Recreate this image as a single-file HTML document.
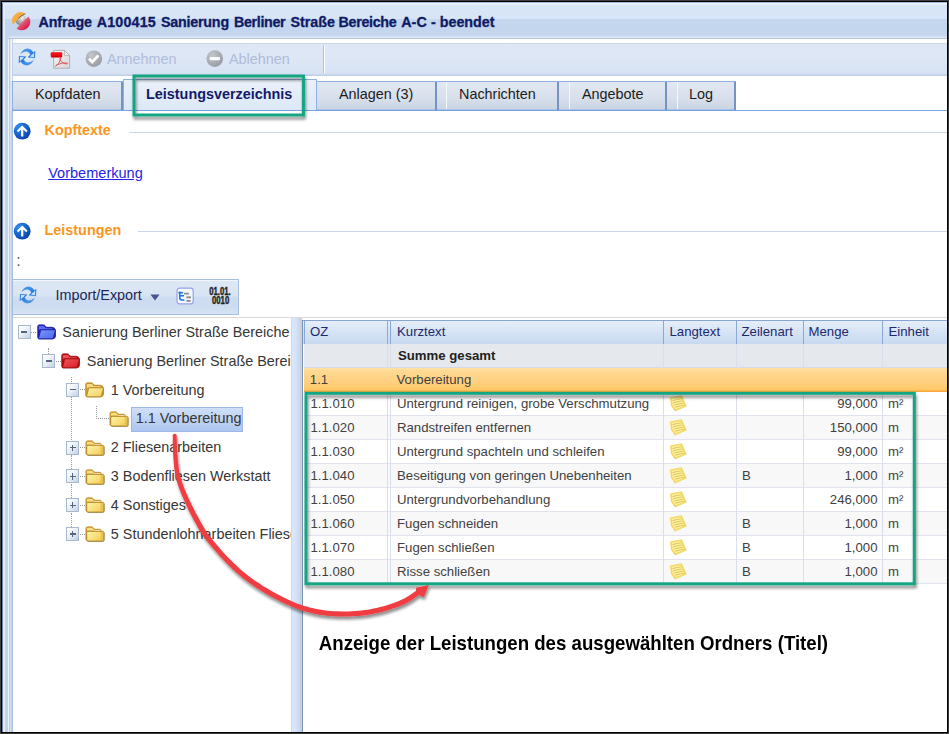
<!DOCTYPE html>
<html lang="de">
<head>
<meta charset="utf-8">
<title>Anfrage A100415 Sanierung Berliner Straße Bereiche A-C - beendet</title>
<style>
*{box-sizing:border-box;margin:0;padding:0}
html,body{width:949px;height:734px;overflow:hidden;background:#fff}
body{position:relative;font-family:"Liberation Sans",Arial,sans-serif;font-size:14.4px;color:#222}
.abs{position:absolute}
i{display:block;position:absolute}
.t{position:absolute;white-space:nowrap;line-height:1}
#frame{left:0;top:0;width:949px;height:734px;border:1px solid #3f3f3f}
#frame2{left:1px;top:1px;width:947px;height:732px;border:1px solid #000}
#hdr{left:2px;top:2px;width:945px;height:34px;background:linear-gradient(#a6bddd 0,#a6bddd 1px,#e9f0fa 1px,#e9f0fa 3.5px,#d9e6f7 3.5px,#d8e5f6 16.5px,#c5d7ef 17px,#c3d6ee 34px)}
#hdr2{left:8px;top:36px;width:939px;height:3px;border-top-left-radius:3px;background:linear-gradient(#d5e2f3 0,#d5e2f3 1px,#dfe8f4 1px,#dfe8f4 2px,#b4c5dc 2px,#b4c5dc 3px)}
#hdr3{left:2px;top:36px;width:14px;height:3px;background:#c3d6ee}
#title{left:38.5px;top:15px;font-weight:bold;font-size:14.3px;color:#0f1a66;-webkit-text-stroke:.3px #0f1a66}
#lstrip{left:5px;top:39px;width:8px;height:693px;background:linear-gradient(90deg,#c1d5ef 0,#c1d5ef 3px,#f0f4fa 3px,#f0f4fa 4px,#bfcbdf 4px,#bfcbdf 5px,#d8e0ec 5px,#d8e0ec 6px,#c0d1ea 6px,#c0d1ea 7px,#a6c0e6 7px,#a6c0e6 8px)}
#lstrip2{left:2px;top:3px;width:3px;height:729px;background:linear-gradient(90deg,#6f82a3 0,#6f82a3 1px,#e3ecf7 1px,#e3ecf7 3px)}
#body{left:13px;top:39px;width:934px;height:693px;background:#fff}
#tbar{left:12px;top:43px;width:935px;height:33px;border-left:1px solid #c1d0e6;background:linear-gradient(#c9d6ea 0,#c9d6ea 1px,#dfe8f6 1px,#dce6f5 18px,#d6e2f3 31px,#bfcfe6 32px,#bfcfe6 33px)}
.dis{color:#b0bcd9}
#tsep{left:323px;top:45px;width:2px;height:28px;background:linear-gradient(90deg,#a9c3e6 0,#a9c3e6 1px,#fff 1px)}
#tabs{left:12px;top:81px;width:724px;height:30px;background:linear-gradient(#8fb0e0 0,#8fb0e0 1px,#e1e8f1 1px,#d9e1ec 15px,#cbd6e3 28px,#a9c3ea 28px,#a9c3ea 29px,#6593d8 29px,#6593d8 30px)}
.tsd{position:absolute;top:82px;width:2px;height:28px;background:#7594c3}
.tsw{position:absolute;top:82px;width:1px;height:27px;background:#f4f7fb}
.tabt{position:absolute;top:87px;white-space:nowrap;line-height:1;color:#1c1c1c;font-size:14.4px}
#atab{left:123px;top:79px;width:193.5px;height:31px;background:linear-gradient(#eaf1fb,#dde8f7);border:1px solid #8fb0e0;border-bottom:0}
#tabline{left:12px;top:110px;width:935px;height:1px;background:#7aa2de}
.sec{font-weight:bold;color:#fa961e;font-size:14.4px}
.sline{position:absolute;height:1px;background:#c9d7ea}
a.lnk{color:#2424e6;text-decoration:underline}
#tb2{left:12px;top:279px;width:227px;height:36px;border:1px solid #a5bfe2;background:linear-gradient(#f2f6fc 0,#f2f6fc 1px,#dde8f5 1px,#d9e5f4 15px,#cddcf0 18px,#cddcf0 26px,#d6e2f3 33px)}
#tree{left:13px;top:317px;width:278px;height:415px;background:#fff;border-top:1px solid #d9d9d9;overflow:hidden}
.tr{position:absolute;white-space:nowrap;line-height:1;font-size:14.4px;color:#363636}
.tbx{position:absolute;width:13px;height:14px;border:1px solid #a9b9cd;background:linear-gradient(135deg,#fff 0,#f0f4f9 40%,#c3d1e4 100%)}
.tbx .mh{left:2.5px;top:5.4px;width:6px;height:1.3px;background:#55657f}
.tbx .mv{left:4.85px;top:3px;width:1.3px;height:6.2px;background:#55657f}
.dv{position:absolute;width:0;border-left:1px dotted #999}
.dh{position:absolute;height:0;border-top:1px dotted #999}
#split{left:291px;top:317px;width:11px;height:415px;border-top:1px solid #d9d9d9;background:linear-gradient(90deg,#d3d7dd 0,#d3d7dd 1px,#dde9fb 1px,#d3e3f9 5px,#c3d9f6 9px,#cbcdd0 9px,#d4d4d4 11px)}
#grid{left:302px;top:317px;width:645px;height:415px;background:#fff;border-top:1px solid #d9d9d9}
#gridl{left:302px;top:320px;width:1px;height:412px;background:#7592b8}
#ghd{left:303px;top:320px;width:644px;height:24px;background:linear-gradient(#86a5d2 0,#86a5d2 1px,#e6eefa 1px,#d9e5f6 10px,#c9daf0 23px,#c9daf0 24px)}
.gh{position:absolute;top:325.3px;font-size:13.2px;line-height:1;color:#1c2a6a;white-space:nowrap}
.hs{position:absolute;top:321px;width:1px;height:23px;background:#8aa8d6}
.row{position:absolute;left:304px;width:643px;height:24px;border-bottom:1px solid #e1e4ee}
.c{position:absolute;font-size:13.2px;line-height:1;color:#414141;white-space:nowrap}
.cs{position:absolute;width:1px;background:#dadeea}
.ic9{position:absolute;font-weight:bold;font-size:9.9px;line-height:1;color:#1e1e1e;-webkit-text-stroke:.4px #1e1e1e;white-space:nowrap;transform-origin:0 0;transform:scaleX(.785)}
</style>
</head>
<body>
<div class="abs" id="hdr"></div>
<div class="abs" id="hdr3"></div>
<div class="abs" id="hdr2"></div>
<div class="abs" id="lstrip"></div>
<div class="abs" id="lstrip2"></div>
<div class="abs" style="left:10px;top:39px;width:3px;height:42px;background:linear-gradient(90deg,#e1e9f4 0,#e1e9f4 1px,#f1f5fb 1px,#f1f5fb 2px,#c8d5e8 2px)"></div>
<div class="abs" style="left:10px;top:81px;width:2px;height:30px;background:linear-gradient(90deg,#d9e2f0 0,#d9e2f0 1px,#dde6f4 1px)"></div>

<svg class="abs" style="left:7.6px;top:7.8px" width="25" height="25" viewBox="0 0 24 24"><defs><radialGradient id="tg" cx=".62" cy=".3" r=".75"><stop offset="0" stop-color="#f0f0f0"/><stop offset=".45" stop-color="#bdbdbd"/><stop offset="1" stop-color="#858585"/></radialGradient><linearGradient id="trd" x1=".2" y1=".2" x2=".8" y2=".9"><stop offset="0" stop-color="#f29aa6"/><stop offset=".5" stop-color="#e4496a"/><stop offset="1" stop-color="#d41446"/></linearGradient><linearGradient id="tor" x1="0" y1="0" x2="1" y2="1"><stop offset="0" stop-color="#f7b24a"/><stop offset="1" stop-color="#f2a02e"/></linearGradient></defs><circle cx="12.3" cy="11.5" r="5.2" fill="url(#tg)"/><path d="M4.9 16 A8.2 8.2 0 0 1 16.6 5.3 Q9.7 9.3 4.9 16 Z" fill="url(#tor)"/><path d="M16.6 5.5 Q12.8 7.2 10 10" fill="none" stroke="#3a2c14" stroke-width=".9" opacity=".7"/><path d="M19.6 8.2 A8.1 8.1 0 0 1 8.2 19.6 Q13.3 13.3 19.6 8.2 Z" fill="url(#trd)"/></svg>
<div class="t" id="title"><span style="position:absolute;left:-0.1px;top:0;letter-spacing:-0.06px">Anfrage</span> <span style="position:absolute;left:58.3px;top:0;letter-spacing:0.15px">A100415</span> <span style="position:absolute;left:122.4px;top:0;letter-spacing:-0.21px">Sanierung</span> <span style="position:absolute;left:195.4px;top:0;letter-spacing:-0.33px">Berliner</span> <span style="position:absolute;left:252.0px;top:0;letter-spacing:0px">Straße</span> <span style="position:absolute;left:300.0px;top:0;letter-spacing:-0.31px">Bereiche</span> <span style="position:absolute;left:362.7px;top:0;letter-spacing:0.1px">A-C</span> <span style="position:absolute;left:392.4px;top:0;letter-spacing:0px">-</span> <span style="position:absolute;left:401.3px;top:0;letter-spacing:-0.02px">beendet</span></div>
<div class="abs" id="body"></div>
<div class="abs" id="tbar"></div>
<div class="abs" id="tsep"></div>
<svg class="abs" style="left:17.1px;top:47.3px" width="20" height="20" viewBox="-10 -10 20 20"><defs><linearGradient id="rg1" x1="0" y1="0" x2=".3" y2="1"><stop offset="0" stop-color="#4a9ff0"/><stop offset="1" stop-color="#1e6cdc"/></linearGradient></defs><g id="ra1"><path d="M-6.3 -3.5 Q-3.6 -8.4 0.8 -8.2 Q4.6 -7.8 6.2 -4.6 L8.2 -5.8 L7.8 0.9 L1 0.3 L3.5 -2.5 Q2.2 -5.3 -0.4 -5.7 Q-3.4 -5.8 -6.3 -3.5 Z" fill="url(#rg1)" stroke="#3a86e0" stroke-width=".35"/><path d="M7.3 -4.2 L7 0.2 L2.8 -0.2 L4.4 -1.9 Z" fill="#bfe4fb"/></g><use href="#ra1" transform="rotate(180)"/></svg>
<svg class="abs" style="left:50px;top:49px" width="21" height="20" viewBox="0 0 21 20"><defs><linearGradient id="pg" x1="0" y1="0" x2="1" y2="1"><stop offset="0" stop-color="#f6f6f6"/><stop offset="1" stop-color="#d6d6d6"/></linearGradient></defs><path d="M3.6 1.4 L14.4 1.4 L19.6 6.6 L19.6 19.2 L3.6 19.2 Z" fill="url(#pg)" stroke="#a9a9a9" stroke-width=".9"/><path d="M14.4 1.4 L14.4 6.6 L19.6 6.6 Z" fill="#ececec" stroke="#a9a9a9" stroke-width=".7"/><rect x=".8" y="3.6" width="11.4" height="4.8" rx=".8" fill="#d40008"/><rect x=".8" y="3.6" width="11.4" height="2.8" rx=".8" fill="#f81018"/><path d="M5.4 17.4 Q9.6 14.8 10.8 9.4 Q11.2 7.8 10.2 8.6 Q9.2 10 11.6 12.8 Q14 15.2 17 15 Q18.2 14.6 16.8 14 Q13 13.2 8 15.4 Q5.2 16.6 5.4 17.4 Z" fill="none" stroke="#df4a50" stroke-width="1" opacity=".9"/></svg>
<svg class="abs" style="left:85px;top:50px" width="18" height="18" viewBox="0 0 18 18"><defs><radialGradient id="cg" cx=".35" cy=".3" r=".85"><stop offset="0" stop-color="#c2c5cb"/><stop offset="1" stop-color="#93969d"/></radialGradient></defs><circle cx="8.8" cy="8.7" r="8.3" fill="url(#cg)"/><path d="M4 8.8 L7.3 12 L13.4 5.4" fill="none" stroke="#fdfdff" stroke-width="2.7"/></svg>
<div class="t dis" style="left:107px;top:52px">Annehmen</div>
<svg class="abs" style="left:205.5px;top:50px" width="18" height="18" viewBox="0 0 18 18"><circle cx="8.8" cy="8.6" r="8.3" fill="url(#cg)"/><rect x="3.7" y="7" width="10.2" height="3.2" rx=".8" fill="#fdfdff"/></svg>
<div class="t dis" style="left:229px;top:52px">Ablehnen</div>
<div class="abs" id="tabs"></div>
<div class="abs" style="left:12px;top:82px;width:1px;height:28px;background:#8fb0e0"></div>
<div class="tsd" style="left:121px"></div>
<div class="tsd" style="left:435px"></div>
<div class="tsw" style="left:446px"></div>
<div class="tsd" style="left:557px"></div>
<div class="tsw" style="left:569px"></div>
<div class="tsd" style="left:665px"></div>
<div class="tsw" style="left:677px"></div>
<div class="tsd" style="left:734px"></div>
<div class="abs" id="tabline"></div>
<div class="abs" id="atab"></div>
<div class="tabt" style="left:35px">Kopfdaten</div>
<div class="tabt" style="left:146px;font-weight:bold;color:#141a6a">Leistungsverzeichnis</div>
<div class="tabt" style="left:339px">Anlagen (3)</div>
<div class="tabt" style="left:459px">Nachrichten</div>
<div class="tabt" style="left:582px">Angebote</div>
<div class="tabt" style="left:689px">Log</div>
<svg class="abs" style="left:13px;top:122px" width="18" height="18" viewBox="0 0 18 18"><defs><radialGradient id="sg1" cx=".3" cy=".25" r=".9"><stop offset="0" stop-color="#2f8df0"/><stop offset=".55" stop-color="#1560c8"/><stop offset="1" stop-color="#083a9a"/></radialGradient></defs><circle cx="9.2" cy="9.2" r="8.4" fill="url(#sg1)"/><path d="M9.2 3.4 L14.6 8.8 L13.2 10.2 L10.3 7.6 L10.3 14.6 L8.1 14.6 L8.1 7.6 L5.2 10.2 L3.8 8.8 Z" fill="#fff"/></svg>
<div class="t sec" style="left:44.5px;top:123px">Kopftexte</div>
<div class="sline" style="left:129px;top:132px;width:818px"></div>
<div class="t" style="left:48.2px;top:166px;font-size:14.55px"><a class="lnk">Vorbemerkung</a></div>
<svg class="abs" style="left:13px;top:222px" width="18" height="18" viewBox="0 0 18 18"><defs><radialGradient id="sg2" cx=".3" cy=".25" r=".9"><stop offset="0" stop-color="#2f8df0"/><stop offset=".55" stop-color="#1560c8"/><stop offset="1" stop-color="#083a9a"/></radialGradient></defs><circle cx="9.2" cy="9.2" r="8.4" fill="url(#sg2)"/><path d="M9.2 3.4 L14.6 8.8 L13.2 10.2 L10.3 7.6 L10.3 14.6 L8.1 14.6 L8.1 7.6 L5.2 10.2 L3.8 8.8 Z" fill="#fff"/></svg>
<div class="t sec" style="left:44.5px;top:223px">Leistungen</div>
<div class="sline" style="left:138px;top:231px;width:809px"></div>
<div class="t" style="left:16.2px;top:253.2px;font-size:16px;color:#5a5a5a">:</div>
<div class="abs" id="tb2"></div>
<svg class="abs" style="left:17.8px;top:285.3px" width="20" height="20" viewBox="-10 -10 20 20"><defs><linearGradient id="rg2" x1="0" y1="0" x2=".3" y2="1"><stop offset="0" stop-color="#4a9ff0"/><stop offset="1" stop-color="#1e6cdc"/></linearGradient></defs><g id="ra2"><path d="M-6.3 -3.5 Q-3.6 -8.4 0.8 -8.2 Q4.6 -7.8 6.2 -4.6 L8.2 -5.8 L7.8 0.9 L1 0.3 L3.5 -2.5 Q2.2 -5.3 -0.4 -5.7 Q-3.4 -5.8 -6.3 -3.5 Z" fill="url(#rg2)" stroke="#3a86e0" stroke-width=".35"/><path d="M7.3 -4.2 L7 0.2 L2.8 -0.2 L4.4 -1.9 Z" fill="#bfe4fb"/></g><use href="#ra2" transform="rotate(180)"/></svg>
<div class="t" style="left:55.5px;top:287.5px;color:#1b2559">Import/Export</div>
<svg class="abs" style="left:150px;top:294px" width="10" height="7" viewBox="0 0 10 7"><path d="M0.4 0.6 L9.6 0.6 L5 6.4 Z" fill="#46558f"/></svg>
<svg class="abs" style="left:175.5px;top:286.5px" width="18" height="18" viewBox="0 0 18 18"><rect x="1" y="1.1" width="16.2" height="15.8" rx="2.6" fill="#f4f6fd" stroke="#9aa0e8" stroke-width="1.2"/><path d="M3.8 4.6 L3.8 11 Q3.8 13 5.8 13 L8.4 13 M3.8 8.8 L8 8.8 M2.4 5.8 L7 5.8" fill="none" stroke="#1a78e8" stroke-width="1.6"/><rect x="8" y="5.8" width="5" height="1.7" fill="#8d8d8d"/><rect x="10.4" y="9.4" width="4.6" height="1.9" fill="#8d8d8d"/><rect x="10.4" y="13" width="4.2" height="1.8" fill="#8d8d8d"/></svg>
<svg class="abs" style="left:206px;top:284px" width="30" height="24" viewBox="0 0 30 24"><g font-family="Liberation Sans, Arial, sans-serif" font-weight="bold" font-size="10px" fill="#1e1e1e" stroke="#1e1e1e" stroke-width=".4"><text transform="translate(3.2 10.9) scale(.775 1)">01.01.</text><text transform="translate(6 19.8) scale(.775 1.06)">0010</text></g></svg>
<div class="abs" id="tree"></div>
<div class="abs" style="left:13px;top:319px;width:279px;height:413px;overflow:hidden"><div class="tbx" style="left:4.7px;top:6.1px"><i class="mh"></i></div><div class="dh" style="left:18.3px;top:12.6px;width:5px"></div><svg class="abs" style="left:24.1px;top:5.2px" width="20" height="16" viewBox="0 0 20 16"><defs><linearGradient id="fo1" x1="0" y1="0" x2="1" y2="1"><stop offset="0" stop-color="#7696fc"/><stop offset="1" stop-color="#4f68ea"/></linearGradient></defs><path d="M0.8 13.6 L0.8 2.4 Q0.8 0.9 2.2 0.9 L6.4 0.9 Q7.4 0.9 8 1.7 L9.4 3.3 L15.2 3.3 Q17.8 3.6 18.4 6 L18.4 12 Q18.4 14.6 16 14.8 L2.4 14.8 Q0.8 14.8 0.8 13.6 Z" fill="#2222b6" stroke="#1a1a9a" stroke-width=".9"/><path d="M1.8 6 L1.8 2.6 Q1.8 1.9 2.6 1.9 L6.2 1.9 Q6.9 1.9 7.4 2.5 L8.8 4.3 L15 4.3 L15.6 5.2 L3.2 5.2 Z" fill="#5a6ff0"/><path d="M1.6 14.2 L3.6 6.5 Q3.8 5.8 4.6 5.8 L17.4 5.8 Q18.6 5.8 18.3 6.8 L16.4 13.8 Q16.2 14.8 15.2 14.8 L2.2 14.8 Q1.4 14.8 1.6 14.2 Z" fill="url(#fo1)" stroke="#1a1a9a" stroke-width=".8"/></svg><div class="tr" style="left:49.3px;top:6.0px">Sanierung Berliner Straße Bereiche A-C</div><div class="tbx" style="left:29.0px;top:35.0px"><i class="mh"></i></div><div class="dh" style="left:42.6px;top:41.5px;width:5px"></div><svg class="abs" style="left:47.6px;top:34.1px" width="20" height="16" viewBox="0 0 20 16"><defs><linearGradient id="fo2" x1="0" y1="0" x2="1" y2="1"><stop offset="0" stop-color="#f2555a"/><stop offset="1" stop-color="#d61e24"/></linearGradient></defs><path d="M0.8 13.6 L0.8 2.4 Q0.8 0.9 2.2 0.9 L6.4 0.9 Q7.4 0.9 8 1.7 L9.4 3.3 L15.2 3.3 Q17.8 3.6 18.4 6 L18.4 12 Q18.4 14.6 16 14.8 L2.4 14.8 Q0.8 14.8 0.8 13.6 Z" fill="#b40e13" stroke="#9a0a0e" stroke-width=".9"/><path d="M1.8 6 L1.8 2.6 Q1.8 1.9 2.6 1.9 L6.2 1.9 Q6.9 1.9 7.4 2.5 L8.8 4.3 L15 4.3 L15.6 5.2 L3.2 5.2 Z" fill="#ea5256"/><path d="M1.6 14.2 L3.6 6.5 Q3.8 5.8 4.6 5.8 L17.4 5.8 Q18.6 5.8 18.3 6.8 L16.4 13.8 Q16.2 14.8 15.2 14.8 L2.2 14.8 Q1.4 14.8 1.6 14.2 Z" fill="url(#fo2)" stroke="#9a0a0e" stroke-width=".8"/></svg><div class="tr" style="left:73.8px;top:35.0px">Sanierung Berliner Straße Bereiche A-C</div><div class="tbx" style="left:53.3px;top:63.8px"><i class="mh"></i></div><div class="dh" style="left:66.9px;top:70.3px;width:5px"></div><svg class="abs" style="left:72.2px;top:62.9px" width="20" height="16" viewBox="0 0 20 16"><defs><linearGradient id="fo3" x1="0" y1="0" x2="1" y2="1"><stop offset="0" stop-color="#fef3a8"/><stop offset="1" stop-color="#f1cf5e"/></linearGradient></defs><path d="M0.8 13.6 L0.8 2.4 Q0.8 0.9 2.2 0.9 L6.4 0.9 Q7.4 0.9 8 1.7 L9.4 3.3 L15.2 3.3 Q17.8 3.6 18.4 6 L18.4 12 Q18.4 14.6 16 14.8 L2.4 14.8 Q0.8 14.8 0.8 13.6 Z" fill="#d3a035" stroke="#b07f1c" stroke-width=".9"/><path d="M1.8 6 L1.8 2.6 Q1.8 1.9 2.6 1.9 L6.2 1.9 Q6.9 1.9 7.4 2.5 L8.8 4.3 L15 4.3 L15.6 5.2 L3.2 5.2 Z" fill="#f6db7c"/><path d="M1.6 14.2 L3.6 6.5 Q3.8 5.8 4.6 5.8 L17.4 5.8 Q18.6 5.8 18.3 6.8 L16.4 13.8 Q16.2 14.8 15.2 14.8 L2.2 14.8 Q1.4 14.8 1.6 14.2 Z" fill="url(#fo3)" stroke="#b07f1c" stroke-width=".8"/></svg><div class="tr" style="left:97.8px;top:64.0px">1 Vorbereitung</div><svg class="abs" style="left:95.5px;top:91.8px" width="20" height="16" viewBox="0 0 20 16"><defs><linearGradient id="fc4" x1="0" y1="0" x2="1" y2=".6"><stop offset="0" stop-color="#fef5ac"/><stop offset="1" stop-color="#f3d15c"/></linearGradient></defs><path d="M1 14 L1 2.3 Q1 0.9 2.4 0.9 L6.6 0.9 Q7.6 0.9 8.2 1.7 L9.6 3.3 L14.8 3.3 Q16 3.3 16 4.5 L16 14 Z" fill="#e4b142" stroke="#b9851f" stroke-width=".9"/><path d="M2 4.6 L2 2.6 Q2 1.9 2.8 1.9 L6.4 1.9 Q7 1.9 7.5 2.5 L8.9 4.2 L15 4.2 L15 4.8 Z" fill="#f9e08a"/><path d="M9.4 4.7 L15.6 4.7" stroke="#fffdf0" stroke-width="1"/><rect x="1.7" y="5.3" width="17.2" height="9.8" rx="1.3" fill="url(#fc4)" stroke="#ad7c18" stroke-width=".9"/><rect x="15.6" y="6" width="2.7" height="8.5" fill="#e2b848" opacity=".65"/><path d="M2.6 15.5 L17.8 15.5 Q19.3 15.5 19.3 14 L19.3 6.6" fill="none" stroke="#6e5216" stroke-width=".8" opacity=".5"/></svg><div class="abs" style="left:118px;top:87.8px;width:112px;height:24.8px;border:1px solid #9db7e8;background:linear-gradient(#cfdff7,#adc6ef)"></div><div class="tr" style="left:122.8px;top:92.0px">1.1 Vorbereitung</div><div class="tbx" style="left:53.3px;top:121.5px"><i class="mh"></i><i class="mv"></i></div><div class="dh" style="left:66.9px;top:128.0px;width:5px"></div><svg class="abs" style="left:72.2px;top:120.6px" width="20" height="16" viewBox="0 0 20 16"><defs><linearGradient id="fc5" x1="0" y1="0" x2="1" y2=".6"><stop offset="0" stop-color="#fef5ac"/><stop offset="1" stop-color="#f3d15c"/></linearGradient></defs><path d="M1 14 L1 2.3 Q1 0.9 2.4 0.9 L6.6 0.9 Q7.6 0.9 8.2 1.7 L9.6 3.3 L14.8 3.3 Q16 3.3 16 4.5 L16 14 Z" fill="#e4b142" stroke="#b9851f" stroke-width=".9"/><path d="M2 4.6 L2 2.6 Q2 1.9 2.8 1.9 L6.4 1.9 Q7 1.9 7.5 2.5 L8.9 4.2 L15 4.2 L15 4.8 Z" fill="#f9e08a"/><path d="M9.4 4.7 L15.6 4.7" stroke="#fffdf0" stroke-width="1"/><rect x="1.7" y="5.3" width="17.2" height="9.8" rx="1.3" fill="url(#fc5)" stroke="#ad7c18" stroke-width=".9"/><rect x="15.6" y="6" width="2.7" height="8.5" fill="#e2b848" opacity=".65"/><path d="M2.6 15.5 L17.8 15.5 Q19.3 15.5 19.3 14 L19.3 6.6" fill="none" stroke="#6e5216" stroke-width=".8" opacity=".5"/></svg><div class="tr" style="left:97.8px;top:121.0px">2 Fliesenarbeiten</div><div class="tbx" style="left:53.3px;top:150.4px"><i class="mh"></i><i class="mv"></i></div><div class="dh" style="left:66.9px;top:156.9px;width:5px"></div><svg class="abs" style="left:72.2px;top:149.5px" width="20" height="16" viewBox="0 0 20 16"><defs><linearGradient id="fc6" x1="0" y1="0" x2="1" y2=".6"><stop offset="0" stop-color="#fef5ac"/><stop offset="1" stop-color="#f3d15c"/></linearGradient></defs><path d="M1 14 L1 2.3 Q1 0.9 2.4 0.9 L6.6 0.9 Q7.6 0.9 8.2 1.7 L9.6 3.3 L14.8 3.3 Q16 3.3 16 4.5 L16 14 Z" fill="#e4b142" stroke="#b9851f" stroke-width=".9"/><path d="M2 4.6 L2 2.6 Q2 1.9 2.8 1.9 L6.4 1.9 Q7 1.9 7.5 2.5 L8.9 4.2 L15 4.2 L15 4.8 Z" fill="#f9e08a"/><path d="M9.4 4.7 L15.6 4.7" stroke="#fffdf0" stroke-width="1"/><rect x="1.7" y="5.3" width="17.2" height="9.8" rx="1.3" fill="url(#fc6)" stroke="#ad7c18" stroke-width=".9"/><rect x="15.6" y="6" width="2.7" height="8.5" fill="#e2b848" opacity=".65"/><path d="M2.6 15.5 L17.8 15.5 Q19.3 15.5 19.3 14 L19.3 6.6" fill="none" stroke="#6e5216" stroke-width=".8" opacity=".5"/></svg><div class="tr" style="left:97.8px;top:150.0px">3 Bodenfliesen Werkstatt</div><div class="tbx" style="left:53.3px;top:179.3px"><i class="mh"></i><i class="mv"></i></div><div class="dh" style="left:66.9px;top:185.8px;width:5px"></div><svg class="abs" style="left:72.2px;top:178.4px" width="20" height="16" viewBox="0 0 20 16"><defs><linearGradient id="fc7" x1="0" y1="0" x2="1" y2=".6"><stop offset="0" stop-color="#fef5ac"/><stop offset="1" stop-color="#f3d15c"/></linearGradient></defs><path d="M1 14 L1 2.3 Q1 0.9 2.4 0.9 L6.6 0.9 Q7.6 0.9 8.2 1.7 L9.6 3.3 L14.8 3.3 Q16 3.3 16 4.5 L16 14 Z" fill="#e4b142" stroke="#b9851f" stroke-width=".9"/><path d="M2 4.6 L2 2.6 Q2 1.9 2.8 1.9 L6.4 1.9 Q7 1.9 7.5 2.5 L8.9 4.2 L15 4.2 L15 4.8 Z" fill="#f9e08a"/><path d="M9.4 4.7 L15.6 4.7" stroke="#fffdf0" stroke-width="1"/><rect x="1.7" y="5.3" width="17.2" height="9.8" rx="1.3" fill="url(#fc7)" stroke="#ad7c18" stroke-width=".9"/><rect x="15.6" y="6" width="2.7" height="8.5" fill="#e2b848" opacity=".65"/><path d="M2.6 15.5 L17.8 15.5 Q19.3 15.5 19.3 14 L19.3 6.6" fill="none" stroke="#6e5216" stroke-width=".8" opacity=".5"/></svg><div class="tr" style="left:97.8px;top:179.0px">4 Sonstiges</div><div class="tbx" style="left:53.3px;top:208.1px"><i class="mh"></i><i class="mv"></i></div><div class="dh" style="left:66.9px;top:214.6px;width:5px"></div><svg class="abs" style="left:72.2px;top:207.2px" width="20" height="16" viewBox="0 0 20 16"><defs><linearGradient id="fc8" x1="0" y1="0" x2="1" y2=".6"><stop offset="0" stop-color="#fef5ac"/><stop offset="1" stop-color="#f3d15c"/></linearGradient></defs><path d="M1 14 L1 2.3 Q1 0.9 2.4 0.9 L6.6 0.9 Q7.6 0.9 8.2 1.7 L9.6 3.3 L14.8 3.3 Q16 3.3 16 4.5 L16 14 Z" fill="#e4b142" stroke="#b9851f" stroke-width=".9"/><path d="M2 4.6 L2 2.6 Q2 1.9 2.8 1.9 L6.4 1.9 Q7 1.9 7.5 2.5 L8.9 4.2 L15 4.2 L15 4.8 Z" fill="#f9e08a"/><path d="M9.4 4.7 L15.6 4.7" stroke="#fffdf0" stroke-width="1"/><rect x="1.7" y="5.3" width="17.2" height="9.8" rx="1.3" fill="url(#fc8)" stroke="#ad7c18" stroke-width=".9"/><rect x="15.6" y="6" width="2.7" height="8.5" fill="#e2b848" opacity=".65"/><path d="M2.6 15.5 L17.8 15.5 Q19.3 15.5 19.3 14 L19.3 6.6" fill="none" stroke="#6e5216" stroke-width=".8" opacity=".5"/></svg><div class="tr" style="left:97.8px;top:208.0px">5 Stundenlohnarbeiten Fliesen</div><div class="dv" style="left:34.6px;top:29px;height:6px"></div><div class="dv" style="left:58.4px;top:58px;height:6.5px"></div><div class="dv" style="left:58.4px;top:78.1px;height:43.3px"></div><div class="dv" style="left:58.4px;top:135.8px;height:14.5px"></div><div class="dv" style="left:58.4px;top:164.7px;height:14.5px"></div><div class="dv" style="left:58.4px;top:193.6px;height:14.5px"></div><div class="dv" style="left:82.6px;top:87px;height:12.6px"></div><div class="dh" style="left:82.6px;top:99.4px;width:13.2px"></div></div>
<div class="abs" id="split"></div>
<div class="abs" id="grid"></div>
<div class="abs" id="gridl"></div>
<div class="abs" id="ghd"></div>
<div class="hs" style="left:304px"></div>
<div class="hs" style="left:387px"></div>
<div class="hs" style="left:390px"></div>
<div class="hs" style="left:663px"></div>
<div class="hs" style="left:736px"></div>
<div class="hs" style="left:803px"></div>
<div class="hs" style="left:882px"></div>
<div class="gh" style="left:310px">OZ</div>
<div class="gh" style="left:397px">Kurztext</div>
<div class="gh" style="left:669.5px">Langtext</div>
<div class="gh" style="left:741.5px">Zeilenart</div>
<div class="gh" style="left:808.5px">Menge</div>
<div class="gh" style="left:888.5px">Einheit</div>
<div class="row" style="top:344px;background:#e5e9ed;border-bottom-color:#d5dbe6"></div>
<div class="c" style="left:398px;top:349px;font-weight:bold;color:#222">Summe gesamt</div>
<div class="row" style="top:368px;background:linear-gradient(#ffe0a4 0,#ffd890 4px,#ffd080 14px,#ffc966 22px,#f9a63a 23px,#f9a63a 24px);border-bottom:0"></div>
<div class="c" style="left:309.8px;top:372.8px">1.1</div>
<div class="c" style="left:396.5px;top:372.8px">Vorbereitung</div>
<div class="row" style="top:392px;background:#fff"></div>
<div class="c" style="left:310.5px;top:397px">1.1.010</div>
<div class="c" style="left:397px;top:397px">Untergrund reinigen, grobe Verschmutzung</div>
<svg class="abs" style="left:669px;top:394px" width="19" height="18" viewBox="0 0 19 18"><path d="M0.9 3.4 L12.9 1.2 L17.8 12.2 L6 17.6 L2 11.9 Z" fill="#f3d867"/><path d="M2.6 4.6 L12 2.9 L15.6 11.4 L6.6 15.4 L3.6 11.2 Z" fill="#f8ef9f"/><path d="M3.4 6.6 L12.6 4.6 M4 8.8 L13.6 6.8 M4.8 11 L14.6 9 M6 13.2 L15.4 11.1" stroke="#e2c451" stroke-width="0.9" fill="none"/></svg>
<div class="c" style="right:71.5px;top:397px">99,000</div>
<div class="c" style="left:888px;top:397px">m²</div>
<div class="row" style="top:416px;background:#f8f8f8"></div>
<div class="c" style="left:310.5px;top:421px">1.1.020</div>
<div class="c" style="left:397px;top:421px">Randstreifen entfernen</div>
<svg class="abs" style="left:669px;top:418px" width="19" height="18" viewBox="0 0 19 18"><path d="M0.9 3.4 L12.9 1.2 L17.8 12.2 L6 17.6 L2 11.9 Z" fill="#f3d867"/><path d="M2.6 4.6 L12 2.9 L15.6 11.4 L6.6 15.4 L3.6 11.2 Z" fill="#f8ef9f"/><path d="M3.4 6.6 L12.6 4.6 M4 8.8 L13.6 6.8 M4.8 11 L14.6 9 M6 13.2 L15.4 11.1" stroke="#e2c451" stroke-width="0.9" fill="none"/></svg>
<div class="c" style="right:71.5px;top:421px">150,000</div>
<div class="c" style="left:888px;top:421px">m</div>
<div class="row" style="top:440px;background:#fff"></div>
<div class="c" style="left:310.5px;top:445px">1.1.030</div>
<div class="c" style="left:397px;top:445px">Untergrund spachteln und schleifen</div>
<svg class="abs" style="left:669px;top:442px" width="19" height="18" viewBox="0 0 19 18"><path d="M0.9 3.4 L12.9 1.2 L17.8 12.2 L6 17.6 L2 11.9 Z" fill="#f3d867"/><path d="M2.6 4.6 L12 2.9 L15.6 11.4 L6.6 15.4 L3.6 11.2 Z" fill="#f8ef9f"/><path d="M3.4 6.6 L12.6 4.6 M4 8.8 L13.6 6.8 M4.8 11 L14.6 9 M6 13.2 L15.4 11.1" stroke="#e2c451" stroke-width="0.9" fill="none"/></svg>
<div class="c" style="right:71.5px;top:445px">99,000</div>
<div class="c" style="left:888px;top:445px">m²</div>
<div class="row" style="top:464px;background:#f8f8f8"></div>
<div class="c" style="left:310.5px;top:469px">1.1.040</div>
<div class="c" style="left:397px;top:469px">Beseitigung von geringen Unebenheiten</div>
<svg class="abs" style="left:669px;top:466px" width="19" height="18" viewBox="0 0 19 18"><path d="M0.9 3.4 L12.9 1.2 L17.8 12.2 L6 17.6 L2 11.9 Z" fill="#f3d867"/><path d="M2.6 4.6 L12 2.9 L15.6 11.4 L6.6 15.4 L3.6 11.2 Z" fill="#f8ef9f"/><path d="M3.4 6.6 L12.6 4.6 M4 8.8 L13.6 6.8 M4.8 11 L14.6 9 M6 13.2 L15.4 11.1" stroke="#e2c451" stroke-width="0.9" fill="none"/></svg>
<div class="c" style="left:742px;top:469px">B</div>
<div class="c" style="right:71.5px;top:469px">1,000</div>
<div class="c" style="left:888px;top:469px">m²</div>
<div class="row" style="top:488px;background:#fff"></div>
<div class="c" style="left:310.5px;top:493px">1.1.050</div>
<div class="c" style="left:397px;top:493px">Untergrundvorbehandlung</div>
<svg class="abs" style="left:669px;top:490px" width="19" height="18" viewBox="0 0 19 18"><path d="M0.9 3.4 L12.9 1.2 L17.8 12.2 L6 17.6 L2 11.9 Z" fill="#f3d867"/><path d="M2.6 4.6 L12 2.9 L15.6 11.4 L6.6 15.4 L3.6 11.2 Z" fill="#f8ef9f"/><path d="M3.4 6.6 L12.6 4.6 M4 8.8 L13.6 6.8 M4.8 11 L14.6 9 M6 13.2 L15.4 11.1" stroke="#e2c451" stroke-width="0.9" fill="none"/></svg>
<div class="c" style="right:71.5px;top:493px">246,000</div>
<div class="c" style="left:888px;top:493px">m²</div>
<div class="row" style="top:512px;background:#f8f8f8"></div>
<div class="c" style="left:310.5px;top:517px">1.1.060</div>
<div class="c" style="left:397px;top:517px">Fugen schneiden</div>
<svg class="abs" style="left:669px;top:514px" width="19" height="18" viewBox="0 0 19 18"><path d="M0.9 3.4 L12.9 1.2 L17.8 12.2 L6 17.6 L2 11.9 Z" fill="#f3d867"/><path d="M2.6 4.6 L12 2.9 L15.6 11.4 L6.6 15.4 L3.6 11.2 Z" fill="#f8ef9f"/><path d="M3.4 6.6 L12.6 4.6 M4 8.8 L13.6 6.8 M4.8 11 L14.6 9 M6 13.2 L15.4 11.1" stroke="#e2c451" stroke-width="0.9" fill="none"/></svg>
<div class="c" style="left:742px;top:517px">B</div>
<div class="c" style="right:71.5px;top:517px">1,000</div>
<div class="c" style="left:888px;top:517px">m</div>
<div class="row" style="top:536px;background:#fff"></div>
<div class="c" style="left:310.5px;top:541px">1.1.070</div>
<div class="c" style="left:397px;top:541px">Fugen schließen</div>
<svg class="abs" style="left:669px;top:538px" width="19" height="18" viewBox="0 0 19 18"><path d="M0.9 3.4 L12.9 1.2 L17.8 12.2 L6 17.6 L2 11.9 Z" fill="#f3d867"/><path d="M2.6 4.6 L12 2.9 L15.6 11.4 L6.6 15.4 L3.6 11.2 Z" fill="#f8ef9f"/><path d="M3.4 6.6 L12.6 4.6 M4 8.8 L13.6 6.8 M4.8 11 L14.6 9 M6 13.2 L15.4 11.1" stroke="#e2c451" stroke-width="0.9" fill="none"/></svg>
<div class="c" style="left:742px;top:541px">B</div>
<div class="c" style="right:71.5px;top:541px">1,000</div>
<div class="c" style="left:888px;top:541px">m</div>
<div class="row" style="top:560px;background:#f8f8f8"></div>
<div class="c" style="left:310.5px;top:565px">1.1.080</div>
<div class="c" style="left:397px;top:565px">Risse schließen</div>
<svg class="abs" style="left:669px;top:562px" width="19" height="18" viewBox="0 0 19 18"><path d="M0.9 3.4 L12.9 1.2 L17.8 12.2 L6 17.6 L2 11.9 Z" fill="#f3d867"/><path d="M2.6 4.6 L12 2.9 L15.6 11.4 L6.6 15.4 L3.6 11.2 Z" fill="#f8ef9f"/><path d="M3.4 6.6 L12.6 4.6 M4 8.8 L13.6 6.8 M4.8 11 L14.6 9 M6 13.2 L15.4 11.1" stroke="#e2c451" stroke-width="0.9" fill="none"/></svg>
<div class="c" style="left:742px;top:565px">B</div>
<div class="c" style="right:71.5px;top:565px">1,000</div>
<div class="c" style="left:888px;top:565px">m</div>
<div class="cs" style="left:387px;top:344px;height:24px"></div>
<div class="cs" style="left:387px;top:392px;height:192px"></div>
<div class="cs" style="left:390px;top:344px;height:24px"></div>
<div class="cs" style="left:390px;top:392px;height:192px"></div>
<div class="cs" style="left:663px;top:344px;height:24px"></div>
<div class="cs" style="left:663px;top:392px;height:192px"></div>
<div class="cs" style="left:736px;top:344px;height:24px"></div>
<div class="cs" style="left:736px;top:392px;height:192px"></div>
<div class="cs" style="left:803px;top:344px;height:24px"></div>
<div class="cs" style="left:803px;top:392px;height:192px"></div>
<div class="cs" style="left:882px;top:344px;height:24px"></div>
<div class="cs" style="left:882px;top:392px;height:192px"></div>
<svg class="abs" style="left:0;top:0" width="949" height="734" viewBox="0 0 949 734">
<defs><filter id="sh" x="-5%" y="-5%" width="112%" height="112%"><feGaussianBlur in="SourceAlpha" stdDeviation="1.8"/><feOffset dx="1.3" dy="2.7"/><feComponentTransfer><feFuncA type="linear" slope=".45"/></feComponentTransfer><feMerge><feMergeNode/><feMergeNode in="SourceGraphic"/></feMerge></filter></defs>
<g filter="url(#sh)">
<path d="M172.8 435.8 L172.8 437.3 L172.8 439.1 L172.8 441.3 L172.8 443.8 L172.8 446.5 L172.9 449.2 L173.0 452.0 L173.2 454.7 L173.4 457.3 L173.6 459.9 L173.8 462.7 L174.0 465.5 L174.3 468.4 L174.7 471.3 L175.2 474.2 L175.8 477.1 L176.5 480.0 L177.4 482.8 L178.3 485.7 L179.3 488.5 L180.4 491.4 L181.5 494.2 L182.7 497.1 L184.0 500.0 L185.3 503.0 L186.8 506.2 L188.3 509.4 L189.9 512.6 L191.6 515.7 L193.1 518.7 L194.7 521.6 L196.1 524.1 L197.3 526.4 L198.4 528.3 L199.3 530.0 L200.3 531.7 L201.4 533.3 L202.5 535.1 L203.9 537.0 L205.6 539.2 L207.6 541.7 L209.8 544.4 L212.2 547.3 L214.8 550.3 L217.4 553.3 L220.1 556.3 L222.7 559.1 L225.2 561.8 L227.6 564.2 L230.0 566.6 L232.4 568.9 L234.8 571.1 L237.2 573.2 L239.6 575.3 L242.0 577.3 L244.4 579.2 L246.9 581.1 L249.3 582.9 L251.8 584.6 L254.2 586.3 L256.7 587.9 L259.1 589.5 L261.6 591.0 L264.0 592.5 L266.4 593.9 L268.8 595.3 L271.2 596.7 L273.7 598.0 L276.1 599.3 L278.5 600.6 L280.9 601.7 L283.3 602.9 L285.7 604.0 L288.0 605.1 L290.3 606.1 L292.7 607.1 L295.1 608.1 L297.6 609.0 L300.1 609.9 L302.8 610.7 L305.5 611.5 L308.3 612.3 L311.2 613.0 L314.1 613.7 L317.1 614.3 L320.3 614.9 L323.5 615.3 L326.7 615.7 L330.2 616.0 L333.7 616.3 L337.4 616.4 L341.2 616.5 L344.9 616.5 L348.6 616.5 L352.2 616.3 L355.7 616.1 L359.0 615.9 L362.2 615.6 L365.4 615.2 L368.5 614.7 L371.5 614.2 L374.6 613.6 L377.6 613.0 L380.6 612.3 L383.7 611.5 L386.8 610.6 L390.0 609.6 L393.1 608.6 L396.1 607.5 L399.0 606.4 L401.7 605.3 L404.3 604.2 L406.7 603.0 L409.0 601.7 L411.2 600.4 L413.2 599.1 L415.0 597.8 L416.6 596.7 L417.9 595.8 L418.9 595.1 L423.9 596.9 L428.9 584.9 L415.8 587.7 L416.1 590.9 L415.0 591.6 L413.7 592.5 L412.1 593.6 L410.4 594.8 L408.5 596.1 L406.4 597.3 L404.3 598.5 L402.1 599.6 L399.8 600.6 L397.1 601.7 L394.3 602.7 L391.4 603.8 L388.4 604.8 L385.4 605.7 L382.4 606.6 L379.4 607.3 L376.5 608.0 L373.6 608.6 L370.6 609.2 L367.7 609.7 L364.7 610.1 L361.7 610.5 L358.5 610.8 L355.3 611.1 L352.0 611.2 L348.5 611.4 L344.9 611.4 L341.2 611.4 L337.6 611.3 L334.0 611.2 L330.5 611.0 L327.3 610.7 L324.1 610.3 L321.1 609.8 L318.1 609.3 L315.2 608.7 L312.4 608.1 L309.6 607.4 L306.9 606.6 L304.2 605.9 L301.7 605.1 L299.3 604.2 L296.9 603.4 L294.7 602.4 L292.4 601.5 L290.1 600.5 L287.8 599.4 L285.5 598.3 L283.1 597.2 L280.8 596.0 L278.4 594.8 L276.1 593.5 L273.7 592.3 L271.4 590.9 L269.0 589.5 L266.6 588.1 L264.2 586.7 L261.8 585.2 L259.5 583.6 L257.1 582.1 L254.7 580.4 L252.3 578.8 L249.9 577.0 L247.6 575.2 L245.2 573.3 L242.9 571.4 L240.5 569.4 L238.2 567.3 L235.9 565.1 L233.5 562.9 L231.2 560.6 L228.8 558.2 L226.4 555.7 L223.8 552.9 L221.2 550.0 L218.6 547.0 L216.1 544.0 L213.7 541.2 L211.5 538.5 L209.6 536.0 L208.0 533.9 L206.7 532.1 L205.6 530.5 L204.7 529.0 L203.8 527.5 L202.8 525.8 L201.8 523.9 L200.5 521.7 L199.1 519.1 L197.6 516.3 L196.0 513.4 L194.4 510.3 L192.8 507.1 L191.2 504.0 L189.8 500.9 L188.4 498.0 L187.2 495.2 L186.0 492.4 L184.8 489.6 L183.7 486.9 L182.7 484.1 L181.8 481.4 L180.9 478.8 L180.2 476.1 L179.6 473.4 L179.1 470.6 L178.7 467.9 L178.4 465.1 L178.1 462.3 L177.8 459.6 L177.6 456.9 L177.4 454.3 L177.2 451.8 L177.1 449.1 L176.9 446.4 L176.9 443.7 L176.8 441.3 L176.7 439.1 L176.7 437.2 L176.6 435.8 Z" fill="#f03c42"/>
<circle cx="174.7" cy="435.8" r="2" fill="#f03c42"/>
<rect x="134" y="76" width="169.4" height="39" fill="none" stroke="#12a583" stroke-width="3"/>
<rect x="306" y="393.3" width="608.3" height="190.5" fill="none" stroke="#12a583" stroke-width="3"/>
</g>
</svg>
<div class="t" style="left:318.8px;top:635.2px;font-weight:bold;font-size:18.65px;color:#000;transform-origin:0 15.8px;transform:scaleY(1.1)">Anzeige der Leistungen des ausgewählten Ordners (Titel)</div>
<div class="abs" id="frame"></div>
<div class="abs" id="frame2"></div>
</body>
</html>
